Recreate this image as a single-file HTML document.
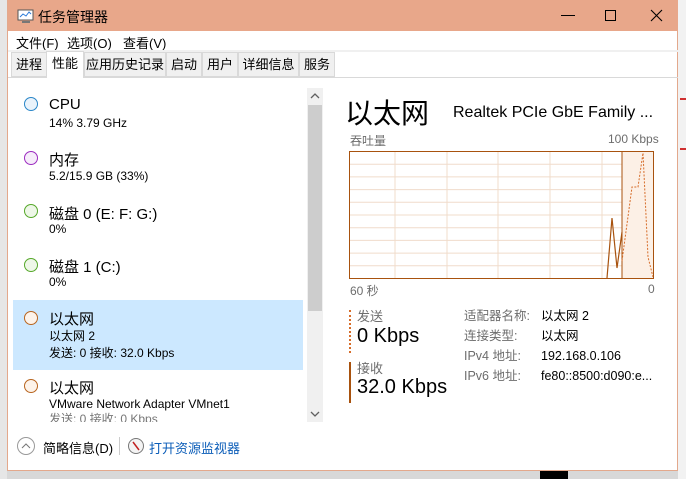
<!DOCTYPE html>
<html><head><meta charset="utf-8"><style>
*{margin:0;padding:0;box-sizing:border-box}
body{width:686px;height:479px;overflow:hidden;background:#d8d8d8;position:relative;font-family:"Liberation Sans","Noto Sans CJK SC",sans-serif;color:#000}
.a{position:absolute;white-space:nowrap}
.win{position:absolute;left:7px;top:0;width:671px;height:471px;background:#fff;border:1px solid #e3a88c;border-top:none}
.tb{position:absolute;left:0;top:0;width:670px;height:31px;background:#e8a78a}
.tab{position:absolute;top:52px;height:25px;background:#f0f0f0;border:1px solid #d9d9d9;font-size:13px;line-height:23px;text-align:center}
.t1{font-size:15px}
.t2{font-size:12px}
.c{position:absolute;width:14px;height:14px;border-radius:50%;border:1.3px solid}
.g{color:#6d6d6d;font-size:12px}
.r{font-size:12.5px;line-height:16px}
</style></head><body>
<div class="a" style="left:0;top:0;width:7px;height:479px;background:#e6e6e6"></div>
<div class="a" style="left:678px;top:0;width:8px;height:479px;background:#f2f2f2"></div>
<div class="a" style="left:680px;top:148px;width:6px;height:2px;background:#d03030"></div>
<div class="a" style="left:680px;top:98px;width:6px;height:2px;background:#d03030"></div>
<div class="a" style="left:540px;top:471px;width:28px;height:8px;background:#000"></div>
<div class="win">
<div class="tb"></div>
<svg class="a" style="left:9px;top:9px" width="18" height="15"><rect x="1" y="1" width="15" height="10" fill="#fff" stroke="#555"/><polyline points="3,8 6,5 9,7 12,3 14,5" fill="none" stroke="#2a7ad8"/><rect x="5" y="12" width="8" height="2" fill="#777"/></svg>
<div class="a" style="left:30px;top:7px;font-size:14px">任务管理器</div>
<div class="a" style="left:553px;top:15px;width:14px;height:1px;background:#000"></div>
<div class="a" style="left:597px;top:10px;width:11px;height:11px;border:1px solid #000"></div>
<svg class="a" style="left:642px;top:9px" width="13" height="13"><path d="M1 1L12 12M12 1L1 12" stroke="#000" stroke-width="1.1"/></svg>
<div class="a" style="left:8px;top:33px;font-size:13px">文件(F)</div>
<div class="a" style="left:59px;top:33px;font-size:13px">选项(O)</div>
<div class="a" style="left:115px;top:33px;font-size:13px">查看(V)</div>
<div class="a" style="left:0;top:50px;width:670px;height:2px;background:#f0f0f0"></div>
<div class="a" style="left:0;top:77px;width:670px;height:1px;background:#d9d9d9"></div>
<div class="tab" style="left:3px;width:36px">进程</div>
<div class="tab" style="left:38px;top:51px;height:27px;width:38px;background:#fff;border-bottom:none">性能</div>
<div class="tab" style="left:76px;width:82px">应用历史记录</div>
<div class="tab" style="left:158px;width:36px">启动</div>
<div class="tab" style="left:194px;width:36px">用户</div>
<div class="tab" style="left:230px;width:61px">详细信息</div>
<div class="tab" style="left:291px;width:36px">服务</div>

<!-- list -->
<div class="c" style="left:16px;top:97px;border-color:#2a86c8;background:#eaf3fb"></div>
<div class="a t1" style="left:41px;top:96px">CPU</div>
<div class="a t2" style="left:41px;top:116px">14% 3.79 GHz</div>
<div class="c" style="left:16px;top:151px;border-color:#9c2cc0;background:#f6ecfa"></div>
<div class="a t1" style="left:41px;top:149px">内存</div>
<div class="a t2" style="left:41px;top:169px">5.2/15.9 GB (33%)</div>
<div class="c" style="left:16px;top:204px;border-color:#56a82a;background:#eef7e8"></div>
<div class="a t1" style="left:41px;top:203px">磁盘 0 (E: F: G:)</div>
<div class="a t2" style="left:41px;top:222px">0%</div>
<div class="c" style="left:16px;top:258px;border-color:#56a82a;background:#eef7e8"></div>
<div class="a t1" style="left:41px;top:256px">磁盘 1 (C:)</div>
<div class="a t2" style="left:41px;top:275px">0%</div>
<div class="a" style="left:5px;top:300px;width:290px;height:70px;background:#cce8ff"></div>
<div class="c" style="left:16px;top:311px;border-color:#b8651f;background:#fdf3ea"></div>
<div class="a t1" style="left:41px;top:308px">以太网</div>
<div class="a t2" style="left:41px;top:327px">以太网 2</div>
<div class="a t2" style="left:41px;top:344px">发送: 0 接收: 32.0 Kbps</div>
<div class="c" style="left:16px;top:379px;border-color:#b8651f;background:#fdf3ea"></div>
<div class="a t1" style="left:41px;top:377px">以太网</div>
<div class="a t2" style="left:41px;top:397px">VMware Network Adapter VMnet1</div>
<div class="a" style="left:0;top:412px;width:298px;height:10px;overflow:hidden"><div class="a t2" style="left:41px;top:-2px;color:#777">发送: 0 接收: 0 Kbps</div></div>
<div class="a" style="left:299px;top:88px;width:16px;height:334px;background:#f0f0f0"></div>
<div class="a" style="left:300px;top:105px;width:14px;height:206px;background:#cdcdcd"></div>
<svg class="a" style="left:302px;top:92px" width="10" height="8"><path d="M1 6L5 2L9 6" fill="none" stroke="#606060" stroke-width="1.3"/></svg>
<svg class="a" style="left:302px;top:410px" width="10" height="8"><path d="M1 2L5 6L9 2" fill="none" stroke="#606060" stroke-width="1.3"/></svg>

<!-- right -->
<div class="a" style="left:337px;top:92px;font-size:28px">以太网</div>
<div class="a" style="left:445px;top:104px;font-size:16px">Realtek PCIe GbE Family ...</div>
<div class="a g" style="left:342px;top:132px">吞吐量</div>
<div class="a g" style="left:600px;top:132px">100 Kbps</div>
<svg class="a" style="left:341px;top:151px" width="305" height="128">
<g stroke="#f0dccb" stroke-width="1">
<path d="M46 1V127M98 1V127M149 1V127M201 1V127M253 1V127"/>
<path d="M1 13.2H304M1 25.9H304M1 38.6H304M1 51.3H304M1 64H304M1 76.7H304M1 89.4H304M1 102.1H304M1 114.8H304"/>
</g>
<rect x="273" y="1" width="31" height="126" fill="#fcf0e6"/>
<path d="M273 1V127" stroke="#a8520e"/>
<path d="M273 110L283 36L289 36L294 2L299 106L304 126" fill="none" stroke="#d66d2a" stroke-dasharray="2,1.5"/>
<path d="M258 127L263 67L268 117L273 81" fill="none" stroke="#a8520e" stroke-width="1.2"/>
<rect x="0.5" y="0.5" width="304" height="127" fill="none" stroke="#a8520e"/>
</svg>
<div class="a g" style="left:342px;top:282px">60 秒</div>
<div class="a g" style="left:640px;top:282px">0</div>
<div class="a" style="left:341px;top:310px;height:43px;border-left:2px dotted #d66d2a"></div>
<div class="a g" style="left:349px;top:306px;font-size:13px">发送</div>
<div class="a" style="left:349px;top:325px;font-size:20px">0 Kbps</div>
<div class="a" style="left:341px;top:362px;height:41px;width:2px;background:#a8520e"></div>
<div class="a g" style="left:349px;top:358px;font-size:13px">接收</div>
<div class="a" style="left:349px;top:376px;font-size:20px">32.0 Kbps</div>
<div class="a g r" style="left:456px;top:308px">适配器名称:</div>
<div class="a g r" style="left:456px;top:328px">连接类型:</div>
<div class="a g r" style="left:456px;top:348px">IPv4 地址:</div>
<div class="a g r" style="left:456px;top:368px">IPv6 地址:</div>
<div class="a r" style="left:533px;top:308px">以太网 2</div>
<div class="a r" style="left:533px;top:328px">以太网</div>
<div class="a r" style="left:533px;top:348px">192.168.0.106</div>
<div class="a r" style="left:533px;top:368px">fe80::8500:d090:e...</div>

<!-- bottom -->
<div class="a" style="left:9px;top:437px;width:18px;height:18px;border-radius:50%;border:1px solid #999"></div>
<svg class="a" style="left:13px;top:442px" width="10" height="8"><path d="M1 6L5 2L9 6" fill="none" stroke="#777"/></svg>
<div class="a" style="left:35px;top:438px;font-size:13px">简略信息(D)</div>
<div class="a" style="left:111px;top:437px;width:1px;height:18px;background:#ccc"></div>
<div class="a" style="left:120px;top:438px;width:16px;height:16px;border-radius:50%;border:1.5px solid #777;background:#f4f4f4"></div>
<svg class="a" style="left:120px;top:438px" width="16" height="16"><path d="M5 4L11 12" stroke="#c02020" stroke-width="1.5"/></svg>
<div class="a" style="left:141px;top:438px;font-size:13px;color:#0a5cb8">打开资源监视器</div>
</div>
</body></html>
